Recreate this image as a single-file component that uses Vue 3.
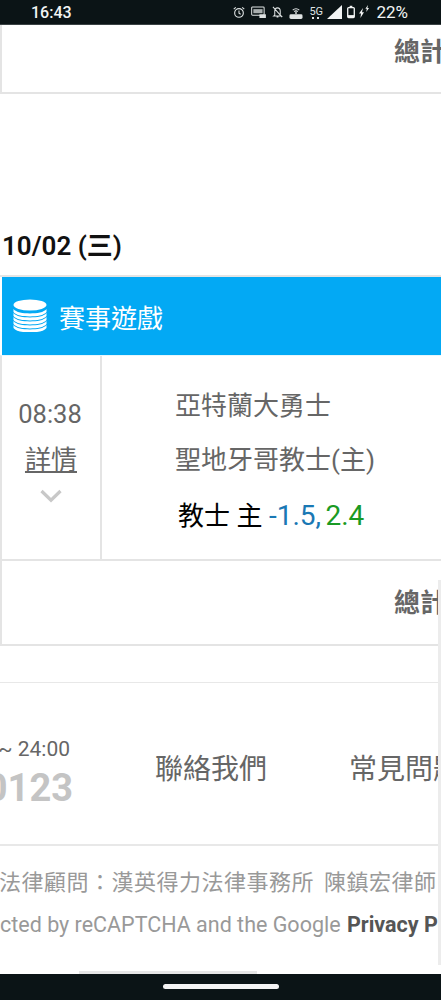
<template>
  <div class="phone">
    <!-- 状态栏 -->
    <div class="status-bar">
      <span class="clock">16:43</span>
      <div class="status-icons">
        <svg class="ico" width="12" height="13" viewBox="0 0 13 13" fill="none" stroke="#dfe3e3" stroke-width="1.2">
          <circle cx="6.5" cy="7" r="4.7" />
          <path d="M6.5 4.4V7.2L8.3 8.3M.8 2.8 3 .9M12.200 2.8 10 .9" />
        </svg>
        <svg class="ico auto" width="15" height="12" viewBox="0 0 16 13">
          <rect x=".6" y="1" width="13.5" height="9" rx="1" fill="none" stroke="#dfe3e3" stroke-width="1.1" />
          <rect x="2.4" y="3.4" width="10" height="4.4" fill="#dfe3e3" opacity=".75" />
          <rect x="9" y="9" width="7" height="4" fill="#dfe3e3" />
        </svg>
        <svg class="ico bell" width="11" height="12" viewBox="0 0 12 13" fill="none" stroke="#dfe3e3" stroke-width="1.1">
          <path d="M3 9.8V5.6C3 3.6 4.3 2 6 2s3 1.600 3 3.600v4.200l1.200 1H1.800zM5 12h2M1 1l10 11" />
        </svg>
        <svg class="ico" width="14" height="14" viewBox="0 0 15 15">
          <path d="M4 5.500C6 3.400 9 3.400 11 5.500M5.600 7.200C6.700 6 8.300 6 9.400 7.200" fill="none" stroke="#dfe3e3" stroke-width="1.1" />
          <circle cx="7.5" cy="8.6" r="1" fill="#dfe3e3" />
          <rect x=".5" y="10" width="14" height="5" rx="1.6" fill="#dfe3e3" />
        </svg>
        <span class="five-g">5G<i class="dots"></i></span>
        <svg class="ico signal" width="15" height="14" viewBox="0 0 15 14"><path d="M15 0V14H0z" fill="#f2f4f4" /></svg>
        <svg class="ico batt" width="8" height="14" viewBox="0 0 9 14">
          <rect x=".8" y="2" width="7.4" height="11.2" rx="1" fill="none" stroke="#f2f4f4" stroke-width="1.5" />
          <rect x="3" y="0" width="3" height="2" fill="#f2f4f4" />
          <rect x="1" y="10.500" width="7" height="2.500" fill="#f2f4f4" />
        </svg>
        <svg class="ico bolts" width="11" height="14" viewBox="0 0 11 14" fill="#f2f4f4">
          <path d="M5 3 1 8.500h2L2.400 13 6 7.200H4zM10 0 7.400 3.800h1.400L8.300 7 11 3H9.400z" />
        </svg>
        <span class="pct">22%</span>
      </div>
    </div>

    <div class="page">
      <!-- 上一张卡片的总计 -->
      <div class="total-box top-box"><b class="total">總計</b></div>

      <h2 class="date">10/02 (三)</h2>

      <div class="game-table">
        <div class="game-head">
          <svg class="stack" width="34" height="33" viewBox="0 0 34 33">
            <ellipse cx="17" cy="6" rx="16.500" ry="5.500" fill="#fff" />
            <path v-for="y in stackRows" :key="y" :d="stackPath(y)" fill="#fff" />
          </svg>
          <span>賽事遊戲</span>
        </div>
        <div class="game-row">
          <div class="time-col">
            <div class="time">08:38</div>
            <a class="detail">詳情</a>
            <svg class="chev" width="22" height="14" viewBox="0 0 22 14" fill="none" stroke="#c8c8c8" stroke-width="3.200">
              <path d="M1.500 2 11 11.200 20.500 2" />
            </svg>
          </div>
          <div class="team-col">
            <div class="team">亞特蘭大勇士</div>
            <div class="team">聖地牙哥教士(主)</div>
            <div class="bet">教士 主 <span class="line">-1.5,</span> <span class="odds">2.4</span></div>
          </div>
        </div>
        <div class="total-box bottom-box"><b class="total">總計</b></div>
      </div>

      <footer class="site-foot">
        <div class="foot-main">
          <div class="service">
            <div class="hours">~ 24:00</div>
            <div class="phone-no">0123</div>
          </div>
          <a class="foot-link contact">聯絡我們</a>
          <a class="foot-link">常見問題</a>
        </div>
        <div class="legal">
          <p class="lawyer">法律顧問：漢英得力法律事務所 陳鎮宏律師</p>
          <p class="captcha">cted by reCAPTCHA and the Google <b>Privacy Policy</b></p>
        </div>
      </footer>

      <!-- 滚动条 -->
      <div class="scroll-y"></div>
      <div class="scroll-x"></div>
    </div>

    <div class="nav-bar"><i class="home-pill"></i></div>
  </div>
</template>

<script setup>
const stackRows = [10, 14, 18, 22, 26]

// 每层硬币的弧形条
const stackPath = (y) =>
  `M.5 ${y}C3 ${y + 3.4} 10 ${y + 4.4} 17 ${y + 4.4}S31 ${y + 3.4} 33.500 ${y}V${y + 3}C31 ${y + 6.400} 24 ${y + 7.400} 17 ${y + 7.400}S3 ${y + 6.400} .5 ${y + 3}Z`
</script>

<style>
html, body { margin: 0; background: #fff; }
</style>

<style scoped>
.phone {
  width: 441px;
  height: 1000px;
  display: flex;
  flex-direction: column;
  overflow: hidden;
  font-family: Roboto, "Noto Sans CJK TC", sans-serif;
  color: #666;
}
.status-bar {
  height: 25px;
  flex: none;
  background: #0b1416;
  color: #f2f4f4;
  display: flex;
  align-items: center;
  justify-content: space-between;
  padding: 0 33px 0 31px;
  font-size: 16px;
  font-weight: 500;
  border-bottom: 1px solid #3a4244;
  box-sizing: border-box;
}
.status-icons { display: flex; align-items: center; gap: 6px; }
.batt { margin-left: -1px; }
.bolts { margin-left: -3px; }
.pct { margin-left: 1px; font-weight: 400; font-size: 17px; }
.ico { display: block; }
.five-g {
  position: relative;
  font-size: 11px;
  font-weight: 400;
  color: #dfe3e3;
  line-height: 13px;
  width: 12px;
  height: 14px;
}
.dots {
  position: absolute;
  left: 3px;
  bottom: 0;
  width: 2px;
  height: 2px;
  background: #dfe3e3;
  box-shadow: 5px 0 #dfe3e3;
}
.page { flex: 1; position: relative; overflow: hidden; background: #fff; }

.total-box {
  border-left: 2px solid #e4e4e4;
  border-bottom: 2px solid #e4e4e4;
  display: flex;
  justify-content: flex-end;
  white-space: nowrap;
  overflow: hidden;
}
.top-box { height: 67px; }
.bottom-box { height: 83px; }
.total {
  font-size: 26px;
  font-weight: 700;
  color: #666;
  margin-right: -5px;
}
.top-box .total { line-height: 54px; }
.bottom-box .total { line-height: 84px; }
.date {
  margin: 132px 0 0 2px;
  font-size: 26px;
  line-height: 40px;
  height: 40px;
  font-weight: 600;
  color: #111;
}
.game-table { margin-top: 9px; border-top: 2px solid #e4e4e4; }
.game-head {
  height: 78px;
  margin-left: 2px;
  background: #03a9f4;
  color: #fff;
  display: flex;
  align-items: center;
  padding-left: 11px;
  gap: 12px;
  font-size: 26px;
}
.stack { margin-top: -1px; }
.game-row {
  display: flex;
  height: 203px;
  border-left: 2px solid #e4e4e4;
  border-top: 1px solid #e8f6fc;
  border-bottom: 2px solid #e4e4e4;
}
.time-col {
  width: 98px;
  flex: none;
  border-right: 2px solid #e4e4e4;
  text-align: center;
  padding-top: 40px;
}
.time { font-size: 25.5px; line-height: 36px; margin-left: -2px; }
.detail {
  display: block;
  font-size: 26px;
  line-height: 38px;
  margin-top: 9px;
  text-decoration: underline;
}
.chev { display: block; margin: 10px auto 0; }
.team-col { padding: 31px 0 0 73px; }
.team { font-size: 26px; line-height: 38px; height: 54px; white-space: nowrap; }
.bet {
  font-size: 26px;
  line-height: 38px;
  color: #000;
  padding: 2px 0 0 3px;
  white-space: nowrap;
}
.line { color: #1a78b4; font-size: 28px; }
.odds { color: #1a9a24; font-size: 28px; margin-left: -2px; }

.site-foot { margin-top: 36px; border-top: 1px solid #e8e8e8; }
.foot-main {
  height: 161px;
  display: flex;
  align-items: center;
  border-bottom: 2px solid #e8e8e8;
  white-space: nowrap;
  overflow: hidden;
}
.service { width: 156px; flex: none; margin-left: -83px; text-align: right; padding-right: 82px; }
.hours { font-size: 21px; line-height: 30px; color: #666; margin-top: 16px; padding-right: 3px; }
.phone-no { font-size: 38px; font-weight: 700; line-height: 44px; margin-top: 2px; color: #c4c4c4; }
.foot-link { font-size: 28px; color: #666; margin-top: 6px; }
.contact { margin-right: 82px; }
.legal { white-space: nowrap; overflow: hidden; }
.legal p { margin: 0; color: #999; font-size: 21.5px; line-height: 32px; }
.lawyer { margin-top: 21px !important; margin-left: -1px !important; font-size: 22px !important; letter-spacing: .5px; word-spacing: 4px; }
.captcha { margin-top: 10px !important; }
.captcha b { color: #555; margin-left: 1px; }
.scroll-y {
  position: absolute;
  right: 0;
  top: 555px;
  width: 3px;
  height: 385px;
  background: #ececec;
}
.scroll-x {
  position: absolute;
  left: 79px;
  bottom: 0;
  width: 178px;
  height: 3px;
  background: #e6e6e6;
}
.nav-bar {
  height: 26px;
  flex: none;
  background: #0b1416;
  display: flex;
  justify-content: center;
  align-items: center;
}
.home-pill { width: 116px; height: 5px; border-radius: 3px; background: #f4f4f4; margin-top: -2px; }
</style>
